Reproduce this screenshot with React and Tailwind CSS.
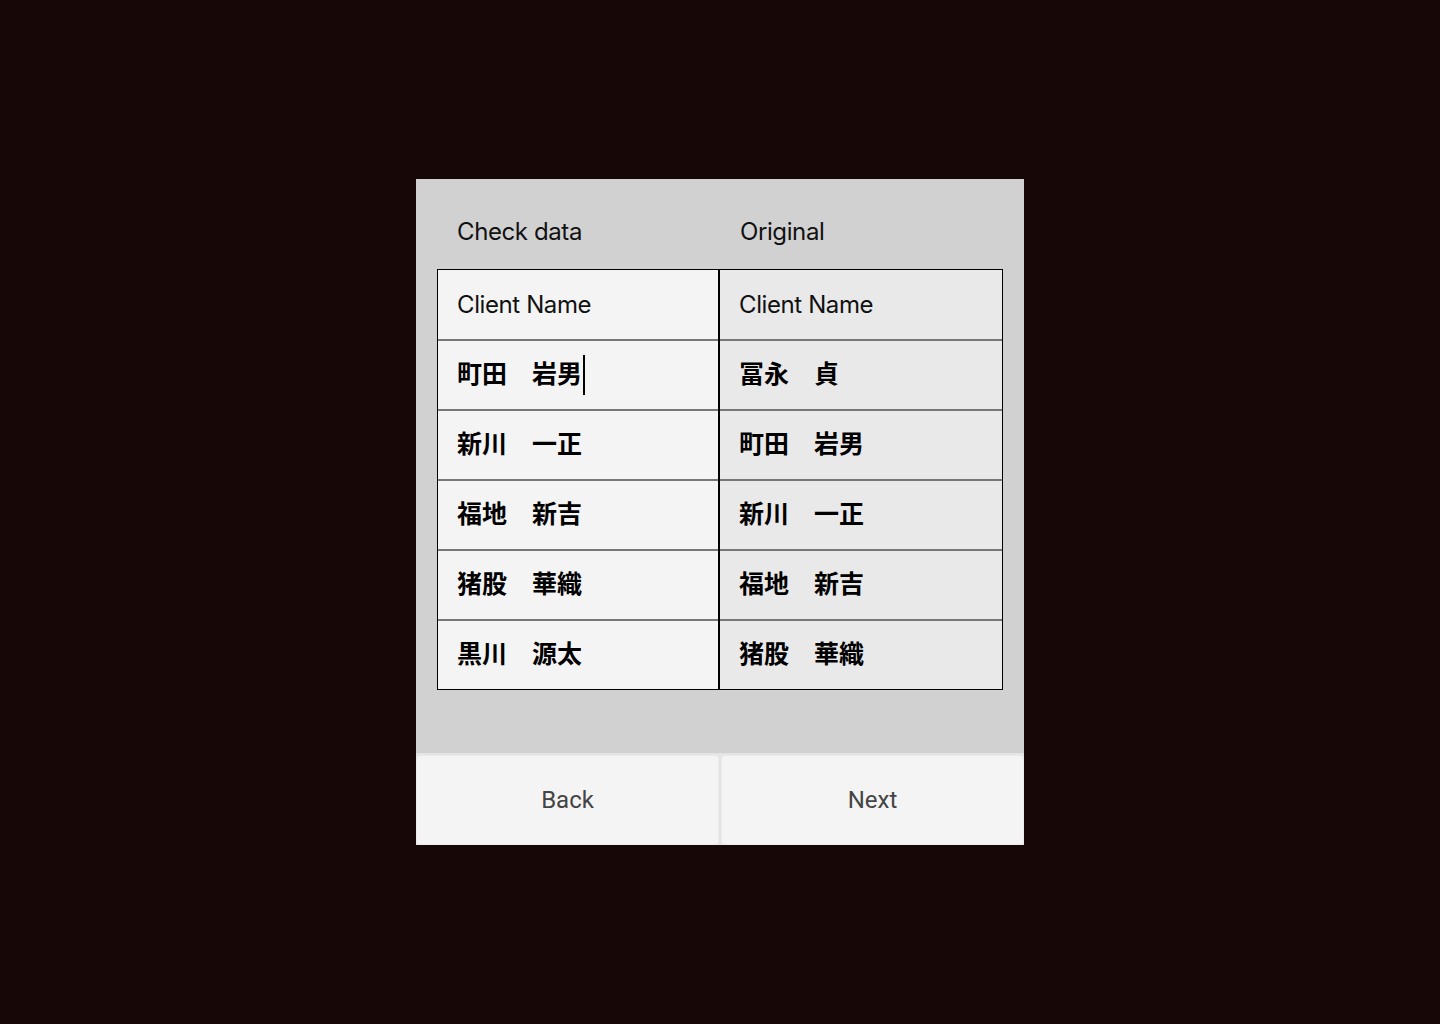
import React from "react";

const left = ["町田　岩男", "新川　一正", "福地　新吉", "猪股　華織", "黒川　源太"];
const right = ["冨永　貞", "町田　岩男", "新川　一正", "福地　新吉", "猪股　華織"];

const latin = "font-['Inter','Noto_Sans',sans-serif] tracking-[-0.4px]";
const cjk = "font-['Inter','Noto_Sans_CJK_JP',sans-serif]";

export default function App() {
  return (
    <div className="w-[1440px] h-[1024px] bg-[#170706] flex items-start justify-center pt-[179px]">
      <div className="w-[608px] flex flex-col bg-[#d1d1d1]">
        <div className={`h-[90px] pt-[38px] grid grid-cols-2 px-[21px] text-[24px] leading-[30px] text-[#111] ${latin}`}>
          <div className="pl-[20px]">Check data</div>
          <div className="pl-[20px]">Original</div>
        </div>
        <div className="mx-[21px] border border-black grid grid-cols-2">
          <div className="bg-[#f4f4f4] border-r-2 border-black">
            <div className={`h-[69px] flex items-center pl-[19px] text-[24px] text-[#111] ${latin}`}>Client Name</div>
            {left.map((n, i) => (
              <div key={i} className={`h-[70px] border-t-2 border-[#777] flex items-center pl-[19px] text-[25px] font-bold text-black ${cjk}`}>
                <span>{n}</span>
                {i === 0 && <span className="ml-[1px] w-[2px] h-[40px] bg-black inline-block" />}
              </div>
            ))}
          </div>
          <div className="bg-[#e9e9e9]">
            <div className={`h-[69px] flex items-center pl-[19px] text-[24px] text-[#111] ${latin}`}>Client Name</div>
            {right.map((n, i) => (
              <div key={i} className={`h-[70px] border-t-2 border-[#777] flex items-center pl-[19px] text-[25px] font-bold text-black ${cjk}`}>
                {n}
              </div>
            ))}
          </div>
        </div>
        <div className="h-[63px]" />
        <div className="bg-[#e4e4e4] pt-[2px] grid grid-cols-2 gap-[2px]">
          <button className="h-[90px] bg-[#f4f4f4] rounded-[4px] border border-[#ececec] text-[24px] text-[#444] font-['Roboto',sans-serif]">Back</button>
          <button className="h-[90px] bg-[#f4f4f4] rounded-[4px] border border-[#ececec] text-[24px] text-[#444] font-['Roboto',sans-serif]">Next</button>
        </div>
      </div>
    </div>
  );
}
